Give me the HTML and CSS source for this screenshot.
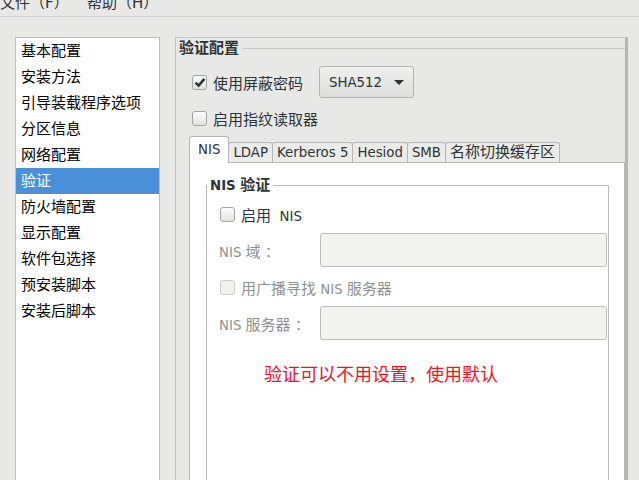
FILE: index.html
```html
<!doctype html>
<html>
<head>
<meta charset="utf-8">
<title>验证配置</title>
<link rel="stylesheet" href="styles.css">
</head>
<body>
	<div class="menubar">
		<div class="menus">
			<span class="menu">文件（F）</span><span class="menu">帮助（H）</span>
		</div>
	</div>
	<div class="main">
		<ul class="sidebar">
			<li>基本配置</li>
			<li>安装方法</li>
			<li>引导装载程序选项</li>
			<li>分区信息</li>
			<li>网络配置</li>
			<li class="selected">验证</li>
			<li>防火墙配置</li>
			<li>显示配置</li>
			<li>软件包选择</li>
			<li>预安装脚本</li>
			<li>安装后脚本</li>
		</ul>
		<div class="panel">
			<fieldset class="frame auth-frame">
				<legend class="cn">验证配置</legend>
				<div class="opt-row">
					<label class="check">
						<span class="box"><svg width="12" height="11" viewBox="0 0 12 11"><path d="M1.6 5.6 L4.6 8.6 L10.4 1.9" fill="none" stroke="#2e3436" stroke-width="2.6"/></svg></span>
						<span class="cn">使用屏蔽密码</span>
					</label>
					<button class="combo">SHA512<span class="arrow"></span></button>
				</div>
				<div class="opt-row small">
					<label class="check">
						<span class="box"></span>
						<span class="cn">启用指纹读取器</span>
					</label>
				</div>
				<div class="notebook">
					<div class="tabs">
						<div class="tab active">NIS</div>
						<div class="tab">LDAP</div>
						<div class="tab">Kerberos 5</div>
						<div class="tab">Hesiod</div>
						<div class="tab">SMB</div>
						<div class="tab cn">名称切换缓存区</div>
					</div>
					<div class="page">
						<fieldset class="frame nis-frame">
							<legend>NIS <span class="cn">验证</span></legend>
							<div class="opt-row small indent">
								<label class="check">
									<span class="box"></span>
									<span><span class="cn">启用</span>&nbsp; NIS</span>
								</label>
							</div>
							<div class="field">
								<span class="field-label">NIS <span class="cn">域<span class="colon">：</span></span></span>
								<span class="entry"></span>
							</div>
							<div class="opt-row small indent">
								<label class="check disabled">
									<span class="box"></span>
									<span><span class="cn">用广播寻找</span> NIS <span class="cn">服务器</span></span>
								</label>
							</div>
							<div class="field">
								<span class="field-label">NIS <span class="cn">服务器<span class="colon">：</span></span></span>
								<span class="entry"></span>
							</div>
							<p class="note">验证可以不用设置，使用默认</p>
						</fieldset>
					</div>
				</div>
			</fieldset>
		</div>
	</div>
</body>
</html>
```

FILE: styles.css
```css
html, body {
	margin: 0;
	height: 480px;
	overflow: hidden;
}
body {
	background: #e8e8e7;
	color: #2e3436;
	font-family: "DejaVu Sans", "Noto Sans CJK SC", sans-serif;
	font-size: 13.33px;
}
.cn { font-size: 15px; }

/* 菜单栏 */
.menubar {
	height: 16px;
	overflow: hidden;
	border-bottom: 1px solid #d2d2d1;
}
.menus {
	margin-top: -7px;
	line-height: 20px;
	font-size: 15px;
	white-space: nowrap;
}
.menu {
	display: inline-block;
	width: 87px;
	color: #2e3436;
}

.main {
	display: flex;
	align-items: stretch;
	height: 520px;
	padding: 20px 0 0 15px;
}

/* 左侧列表 */
.sidebar {
	width: 145px;
	box-sizing: border-box;
	margin: 0;
	padding: 0;
	list-style: none;
	background: #fff;
	border: 1px solid #bcbcbc;
}
.sidebar li {
	height: 26px;
	line-height: 26px;
	padding-left: 5px;
	font-size: 15px;
	color: #000;
	white-space: nowrap;
}
.sidebar li.selected {
	background: #4a90d9;
	color: #fff;
}

/* 右侧面板 */
.panel {
	width: 453px;
	box-sizing: border-box;
	margin-left: 15px;
	padding-top: 2px;
	border-top: 1px solid #c6c6c5;
	border-left: 1px solid #c0c0bf;
	border-right: 3px solid #b6b6b5;
}
.frame {
	margin: 0;
	padding: 0;
	min-width: 0;
}
.frame legend {
	padding: 0 3px;
	line-height: 16px;
	font-weight: bold;
	color: #2e3436;
}
.auth-frame {
	border: 0;
	border-top: 1px solid #c6c6c5;
}

.opt-row {
	display: flex;
	align-items: center;
	height: 32px;
	margin-top: 10px;
	padding-left: 16px;
}
.opt-row.small {
	height: 24px;
	margin-top: 8px;
}
.check {
	display: flex;
	align-items: center;
	white-space: nowrap;
}
.box {
	display: flex;
	align-items: center;
	justify-content: center;
	width: 15px;
	height: 15px;
	box-sizing: border-box;
	margin-right: 6px;
	border: 1px solid #a3a5a5;
	border-radius: 3px;
	background: linear-gradient(#fdfdfd, #e2e2e1);
}
.check.disabled { color: #8f9191; }
.check.disabled .box {
	border-color: #cbcccc;
	background: #f1f1f0;
}

.combo {
	display: flex;
	align-items: center;
	width: 95px;
	height: 32px;
	margin-left: 16px;
	padding: 0 0 0 9px;
	border: 1px solid #b4b4b3;
	border-radius: 3px;
	background: linear-gradient(#f0f0ef, #dddddc);
	color: #2e3436;
	font: inherit;
}
.arrow {
	margin-left: 12px;
	width: 0;
	height: 0;
	border-left: 5px solid transparent;
	border-right: 5px solid transparent;
	border-top: 5px solid #2e3436;
}

/* 标签页 */
.notebook {
	margin: 6px 0 0 13px;
}
.tabs {
	display: flex;
	align-items: flex-end;
	height: 26px;
}
.tab {
	position: relative;
	height: 19px;
	line-height: 19px;
	padding: 0 4px;
	margin-left: -1px;
	border: 1px solid #b6b6b5;
	border-bottom: 0;
	border-radius: 3px 3px 0 0;
	background: #ebebea;
	white-space: nowrap;
}
.tab:first-child { margin-left: 0; }
.tab.active {
	z-index: 2;
	height: 26px;
	line-height: 26px;
	margin-bottom: -1px;
	padding: 0 8px;
	background: #fff;
}
.page {
	height: 330px;
	background: #fff;
	border: 1px solid #b6b6b5;
}

/* NIS 验证 */
.nis-frame {
	margin: 14px 15px 0 16px;
	height: 400px;
	border: 1px solid #b9b9b8;
}
.indent {
	padding-left: 13px;
	margin-top: 9px;
}
.field {
	display: flex;
	align-items: center;
	height: 34px;
	margin-top: 7px;
	color: #8f9191;
}
.field-label {
	width: 101px;
	padding-left: 12px;
	white-space: nowrap;
}
.colon { margin-left: 4px; }
.entry {
	flex: 1;
	height: 34px;
	box-sizing: border-box;
	margin-right: 1px;
	border: 1px solid #bdbdbc;
	border-radius: 3px;
	background: #f2f2f1;
}
.note {
	margin: 23px 0 0 57px;
	line-height: 24px;
	font-size: 18px;
	color: #f5101f;
}
```
